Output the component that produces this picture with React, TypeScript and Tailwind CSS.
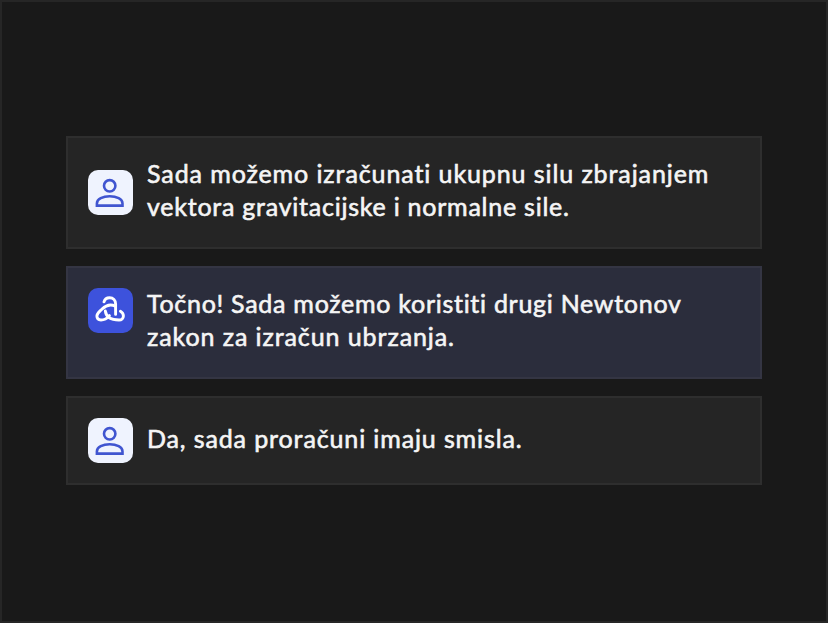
type Line = { text: string; tracking: string };

function UserIcon() {
  return (
    <div className="size-[44.5px] shrink-0 rounded-[10px] bg-[#eff3fe]">
      <svg width="44" height="44" viewBox="0 0 44 44" fill="none" stroke="#4055d0" strokeWidth="2.6">
        <circle cx="21.7" cy="15.8" r="5.7" />
        <path d="M8.9 35.6v-2.2c0-4.2 6-7.2 12.8-7.2s12.8 3 12.8 7.2v2.2z" />
      </svg>
    </div>
  );
}

function BotIcon() {
  return (
    <div className="size-[44.5px] shrink-0 rounded-[10px] bg-[#3d52dc]">
      <svg width="44" height="44" viewBox="0 0 44 44" fill="none" stroke="#fff" strokeWidth="2.9" strokeLinecap="round" strokeLinejoin="round">
        <path d="M16 13.8C16.7 11.1 19 9.7 21.6 9.7C25.2 9.7 27.6 12.3 27.6 15.9V26.4" />
        <path d="M32.4 23.2C34.4 24.4 35.4 26 35.4 28C35.4 30.3 33.6 32 31 32C24.2 32 18.2 29.5 17.3 23" />
        <path d="M21.4 27.6C19 30.5 16 32 13 32C10.6 32 8.9 30.5 8.9 28.1C8.9 25.2 11.3 23.8 14.1 21C18.2 16.9 22.8 15.8 27.4 18.2" />
      </svg>
    </div>
  );
}

function Message({ lines }: { lines: Line[] }) {
  return (
    <p className="font-['Lato','Liberation_Sans',sans-serif] text-[25px] leading-[33px] whitespace-nowrap text-[#f5f5f5] [-webkit-text-stroke:0.6px_#f5f5f5] [font-variant-ligatures:none]">
      {lines.map((l) => (
        <span key={l.text} className={`block ${l.tracking}`}>{l.text}</span>
      ))}
    </p>
  );
}

export default function App() {
  return (
    <main className="flex h-[623px] w-[828px] flex-col gap-[17px] border-2 border-[#262626] bg-[#191919] px-16 pt-[134px]">
      <section className="flex h-[113px] w-[696px] items-start gap-[14.5px] border-2 border-[#2e2e2e] bg-[#252525] px-5 pt-[19px]">
        <div className="pt-[13px]"><UserIcon /></div>
        <Message lines={[
          { text: "Sada možemo izračunati ukupnu silu zbrajanjem", tracking: "tracking-[0.91px]" },
          { text: "vektora gravitacijske i normalne sile.", tracking: "tracking-[0.76px]" },
        ]} />
      </section>
      <section className="flex h-[113px] w-[696px] items-start gap-[14.5px] border-2 border-[#343543] bg-[#2b2d3c] px-5 pt-[19px]">
        <div className="pt-px"><BotIcon /></div>
        <Message lines={[
          { text: "Točno! Sada možemo koristiti drugi Newtonov", tracking: "tracking-[0.72px]" },
          { text: "zakon za izračun ubrzanja.", tracking: "tracking-[0.91px]" },
        ]} />
      </section>
      <section className="flex h-[89px] w-[696px] items-start gap-[14.5px] border-2 border-[#2e2e2e] bg-[#252525] px-5 pt-5">
        <UserIcon />
        <div className="pt-1"><Message lines={[{ text: "Da, sada proračuni imaju smisla.", tracking: "tracking-[0.88px]" }]} /></div>
      </section>
    </main>
  );
}
